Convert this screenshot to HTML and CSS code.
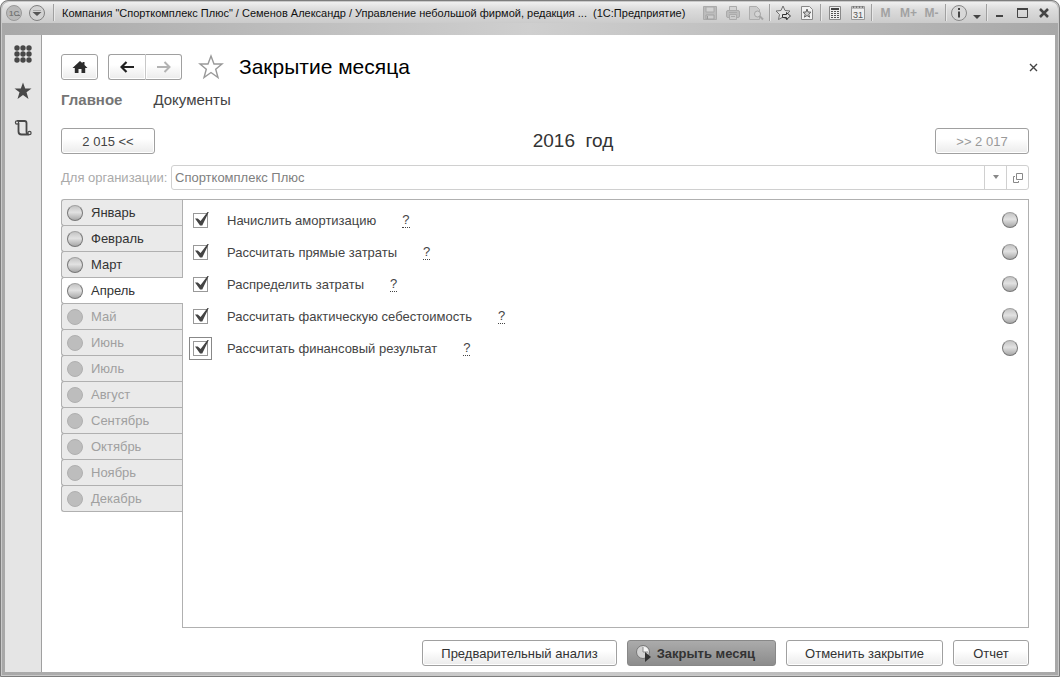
FILE: index.html
```html
<!DOCTYPE html>
<html lang="ru">
<head>
<meta charset="utf-8">
<title>Закрытие месяца</title>
<link rel="stylesheet" href="styles.css">
</head>
<body>
<div class="window">
  <header class="titlebar">
    <button class="orb" type="button" aria-label="Меню 1С"><svg width="18" height="18" viewBox="0 0 18 18"><circle cx="9" cy="9" r="7.500" fill="#b9b9b9" stroke="#999"/><text class="logo" x="4" y="12">1С</text><path d="M10 11.500h5" stroke="#777"/></svg></button>
    <button class="orb" type="button" aria-label="Главное меню"><svg width="18" height="18" viewBox="0 0 18 18"><circle cx="9" cy="9" r="7.500" fill="#d2d2d2" stroke="#808080"/><path d="M5 6.500H13" stroke="#aaa"/><path d="M4.500 8H13.500L9 12Z" fill="#555"/></svg></button>
    <span class="sep"></span>
    <div class="window-title">Компания "Спорткомплекс Плюс" / Семенов Александр / Управление небольшой фирмой, редакция ...&nbsp; (1С:Предприятие)</div>
    <div class="tools">
      <button class="tool" type="button" aria-label="Сохранить"><svg width="16" height="16" viewBox="0 0 16 16"><path d="M1.500 1.500h13v13h-13z" fill="#bcbcbc" stroke="#ababab"/><path d="M4 2h8v5H4z" fill="#d2d2d2" stroke="#aaa"/><path d="M4 10h8v4H4z" fill="#ccc" stroke="#a2a2a2"/><path d="M5.500 11v3" stroke="#999"/></svg></button>
      <button class="tool" type="button" aria-label="Печать"><svg width="16" height="16" viewBox="0 0 16 16"><path d="M4.500 1.500h7v5h-7z" fill="#d3d3d3" stroke="#ababab"/><rect x="1.500" y="5.500" width="13" height="7" rx="1.500" fill="#bcbcbc" stroke="#ababab"/><path d="M4.500 9.500h7v5h-7z" fill="#ccc" stroke="#ababab"/><path d="M6 11.500h4M4 7.500h8" stroke="#aaa"/></svg></button>
      <button class="tool" type="button" aria-label="Просмотр"><svg width="16" height="16" viewBox="0 0 16 16"><path d="M1.500 1.500h7l3 3v10h-10z" fill="#ccc" stroke="#adadad"/><circle cx="9.500" cy="9" r="3" fill="#d5d5d5" stroke="#a5a5a5"/><path d="m11.500 11 3.500 3.500" stroke="#a5a5a5" stroke-width="2"/></svg></button>
      <span class="sep"></span>
      <button class="tool" type="button" aria-label="Добавить в избранное"><svg width="17" height="16" viewBox="0 0 17 16"><path d="m8 1 2 4.500 5 .5-3.500 3.500 1 5L8 12l-4.500 2.500 1-5L1 6l5-.5Z" fill="#e4e4e4" stroke="#707070"/><path d="M7.500 9.500h4v-2l4 3.500-4 3.500v-2h-4z" fill="#ddd" stroke="#333"/></svg></button>
      <button class="tool" type="button" aria-label="Избранное"><svg width="16" height="16" viewBox="0 0 16 16"><path d="M2.500 1.500h8l3 3v10h-11z" fill="#f2f2f2" stroke="#888"/><path d="m8 4 1 3 3 .2-2.200 2 .8 3L8 10.500l-2.600 1.700.8-3L4 7.200 7 7Z" fill="#ccc" stroke="#666"/></svg></button>
      <span class="sep"></span>
      <button class="tool" type="button" aria-label="Калькулятор"><svg width="16" height="16" viewBox="0 0 16 16"><path d="M2.500 1.500h11v13h-11z" fill="#eee" stroke="#888"/><path d="M4 4h8" stroke="#444" stroke-width="2"/><path d="M4 6.500h8M4 8.500h8M4 10.500h8M4 12.500h8" stroke="#555" stroke-dasharray="2 1"/></svg></button>
      <button class="tool" type="button" aria-label="Календарь"><svg width="16" height="16" viewBox="0 0 16 16"><path d="M1.500 1.500h13v13h-13z" fill="#eee" stroke="#999"/><path d="M2 3h12" stroke="#bbb" stroke-width="2"/><path d="M3.500 1v2M6.500 1v2M9.500 1v2M12.500 1v2" stroke="#777"/><text class="day" x="3" y="13">31</text></svg></button>
      <span class="sep"></span>
      <button class="tool mem" type="button">M</button>
      <button class="tool mem" type="button">M+</button>
      <button class="tool mem" type="button">M-</button>
      <span class="sep"></span>
      <button class="tool info" type="button" aria-label="Справка"><svg width="18" height="18" viewBox="0 0 18 18"><circle cx="9" cy="9" r="7.500" fill="#d8d8d8" stroke="#888"/><path d="M9 4v2M9 7.500v6" stroke="#444" stroke-width="2"/></svg></button>
      <button class="tool more" type="button" aria-label="Ещё"><svg width="8" height="16" viewBox="0 0 8 16"><path d="M0 10h8l-4 4z" fill="#444"/></svg></button>
      <span class="sep"></span>
      <button class="tool win" type="button" aria-label="Свернуть"><svg width="14" height="16" viewBox="0 0 14 16"><path d="M3 11h7" stroke="#444" stroke-width="2"/></svg></button>
      <button class="tool win" type="button" aria-label="Развернуть"><svg width="14" height="16" viewBox="0 0 14 16"><path d="M2.500 12.500h10v-9h-10Z" fill="none" stroke="#444"/><path d="M2 4h11" stroke="#444" stroke-width="2"/></svg></button>
      <button class="tool win" type="button" aria-label="Закрыть окно"><svg width="14" height="16" viewBox="0 0 14 16"><path d="m3 4 8 8M11 4l-8 8" stroke="#444" stroke-width="2.500"/></svg></button>
    </div>
  </header>

  <div class="body">
    <nav class="sidebar" aria-label="Панель разделов">
      <button class="side" type="button" aria-label="Разделы"><svg width="18" height="18" viewBox="0 0 18 18" fill="#484848"><circle cx="3" cy="3" r="2.700"/><circle cx="9" cy="3" r="2.700"/><circle cx="15" cy="3" r="2.700"/><circle cx="3" cy="9" r="2.700"/><circle cx="9" cy="9" r="2.700"/><circle cx="15" cy="9" r="2.700"/><circle cx="3" cy="15" r="2.700"/><circle cx="9" cy="15" r="2.700"/><circle cx="15" cy="15" r="2.700"/></svg></button>
      <button class="side" type="button" aria-label="Избранное"><svg width="18" height="18" viewBox="0 0 18 18"><path d="m9 .5 2.200 6H17.500l-5 3.800 2 6.700L9 13l-5.500 4 2-6.700-5-3.800H6.800Z" fill="#484848"/></svg></button>
      <button class="side" type="button" aria-label="История"><svg width="18" height="18" viewBox="0 0 18 18" fill="none" stroke="#484848"><path d="M3 2h7.500q2 0 2 2v8.500c0 2 1 3 2.500 3H7.500c-2 0-3-1-3-3V4" stroke-width="1.800"/><circle cx="3" cy="3.500" r="1.600" stroke-width="1.200" fill="#e5e5e5"/><circle cx="15.500" cy="14" r="1.600" stroke-width="1.200" fill="#e5e5e5"/></svg></button>
    </nav>

    <main class="main">
      <div class="head">
        <button class="btn home" type="button" aria-label="Домой"><svg width="16" height="14" viewBox="0 0 16 14"><path d="M8 1 .5 8h2.300v5h3.700V9h3v4h3.700V8h2.300L12.500 5V2h-2v1.300Z" fill="#2b2b2b"/></svg></button>
        <div class="pair">
          <button class="btn back" type="button" aria-label="Назад"><svg width="14" height="12" viewBox="0 0 14 12"><path d="M14 6H2M6.500 1 1.500 6l5 5" fill="none" stroke="#222" stroke-width="2.200"/></svg></button>
          <button class="btn fwd" type="button" aria-label="Вперед" disabled><svg width="14" height="12" viewBox="0 0 14 12"><path d="M0 6h12M7.500 1l5 5-5 5" fill="none" stroke="#b3b3b3" stroke-width="2"/></svg></button>
        </div>
        <button class="fav" type="button" aria-label="В избранное"><svg width="26" height="26" viewBox="0 0 26 26"><path d="m13 2 3 8h8l-6.300 5.200 2.300 8.300-7-5-7 5 2.300-8.300L2 10h8Z" fill="#fff" stroke="#999" stroke-width="1.400"/></svg></button>
        <h1 class="title">Закрытие месяца</h1>
        <button class="close" type="button" aria-label="Закрыть"><svg width="9" height="9" viewBox="0 0 9 9"><path d="m1 1 7 7M8 1 1 8" stroke="#444" stroke-width="1.400"/></svg></button>
      </div>

      <nav class="links">
        <a class="link current" href="#">Главное</a>
        <a class="link" href="#">Документы</a>
      </nav>

      <div class="years">
        <button class="btn year" type="button">2 015 &lt;&lt;</button>
        <h2 class="current-year">2016&nbsp; год</h2>
        <button class="btn year" type="button" disabled>&gt;&gt; 2 017</button>
      </div>

      <div class="org">
        <label class="org-label" for="org">Для организации:</label>
        <div class="field">
          <input class="org-input" id="org" type="text" value="Спорткомплекс Плюс" readonly>
          <button class="field-btn" type="button" aria-label="Выбрать"><svg width="8" height="5" viewBox="0 0 8 5"><path d="M1 0h6L4 4z" fill="#888"/></svg></button>
          <button class="field-btn" type="button" aria-label="Открыть"><svg width="10" height="10" viewBox="0 0 10 10" fill="none" stroke="#888"><path d="M3.500.5h6v6h-6zM2 3.500H.5v6h5V8"/></svg></button>
        </div>
      </div>

      <div class="sheet">
        <div class="months" role="tablist" aria-orientation="vertical">
          <button class="month" role="tab" type="button"><span class="ball"></span>Январь</button>
          <button class="month" role="tab" type="button"><span class="ball"></span>Февраль</button>
          <button class="month" role="tab" type="button"><span class="ball"></span>Март</button>
          <button class="month active" role="tab" type="button" aria-selected="true"><span class="ball"></span>Апрель</button>
          <button class="month" role="tab" type="button" disabled><span class="ball"></span>Май</button>
          <button class="month" role="tab" type="button" disabled><span class="ball"></span>Июнь</button>
          <button class="month" role="tab" type="button" disabled><span class="ball"></span>Июль</button>
          <button class="month" role="tab" type="button" disabled><span class="ball"></span>Август</button>
          <button class="month" role="tab" type="button" disabled><span class="ball"></span>Сентябрь</button>
          <button class="month" role="tab" type="button" disabled><span class="ball"></span>Октябрь</button>
          <button class="month" role="tab" type="button" disabled><span class="ball"></span>Ноябрь</button>
          <button class="month" role="tab" type="button" disabled><span class="ball"></span>Декабрь</button>
        </div>
        <section class="panel" role="tabpanel">
          <div class="step"><input class="check" type="checkbox" id="s1" checked><label class="step-name" for="s1">Начислить амортизацию</label><a class="help" href="#">?</a><span class="ball"></span></div>
          <div class="step"><input class="check" type="checkbox" id="s2" checked><label class="step-name" for="s2">Рассчитать прямые затраты</label><a class="help" href="#">?</a><span class="ball"></span></div>
          <div class="step"><input class="check" type="checkbox" id="s3" checked><label class="step-name" for="s3">Распределить затраты</label><a class="help" href="#">?</a><span class="ball"></span></div>
          <div class="step"><input class="check" type="checkbox" id="s4" checked><label class="step-name" for="s4">Рассчитать фактическую себестоимость</label><a class="help" href="#">?</a><span class="ball"></span></div>
          <div class="step"><input class="check focused" type="checkbox" id="s5" checked><label class="step-name" for="s5">Рассчитать финансовый результат</label><a class="help" href="#">?</a><span class="ball"></span></div>
        </section>
      </div>

      <footer class="actions">
        <button class="btn action" type="button">Предварительный анализ</button>
        <button class="btn action primary" type="button"><svg width="18" height="18" viewBox="0 0 18 18"><circle cx="8" cy="8" r="6.500" fill="#d2d2d2" stroke="#777"/><path d="M8 8V2.500A5.500 5.500 0 0 1 13.500 8Z" fill="#f6f6f6"/><path d="M8 3v5h5" fill="none" stroke="#888"/><path d="m10 8 6 5-6 5z" fill="#333"/></svg>Закрыть месяц</button>
        <button class="btn action" type="button">Отменить закрытие</button>
        <button class="btn action" type="button">Отчет</button>
      </footer>
    </main>
  </div>
</div>
</body>
</html>
```
FILE: styles.css
```css
* { box-sizing: border-box; }

body {
  margin: 0;
  background: #fff;
  font-family: "Liberation Sans", Arial, sans-serif;
  font-size: 13px;
  color: #444;
}

button, input { font: inherit; color: inherit; }

button {
  display: flex;
  align-items: center;
  justify-content: center;
  margin: 0;
  padding: 0;
  border: 0;
  background: none;
}

a { color: inherit; text-decoration: none; }
h1, h2 { margin: 0; font-weight: normal; }
svg { flex: none; display: block; }

/* Window frame */
.window {
  display: flex;
  flex-direction: column;
  min-height: 100vh;
  padding: 0 4px 4px;
  border: 1px solid #7d7d7d;
  border-radius: 8px 8px 0 0;
  background: linear-gradient(90deg, #a8a8a8, #cfcfcf 50%, #a8a8a8);
  box-shadow: inset 0 0 0 1px #c9c9c9;
}

.titlebar {
  display: flex;
  align-items: center;
  height: 21px;
  margin: 1px -3px 12px;
  padding: 0 3px;
  border-radius: 7px 7px 0 0;
  background: linear-gradient(#f0f0f0, #dcdcdc 35%, #cbcbcb);
}

.orb { width: 18px; margin-right: 5px; }
.logo { font-size: 8px; font-weight: bold; fill: #777; }

.sep {
  flex: none;
  width: 5px;
  height: 17px;
  background: linear-gradient(90deg, transparent 2px, #a0a0a0 2px 3px, #e8e8e8 3px 4px, transparent 4px);
}

.window-title {
  flex: 1;
  min-width: 0;
  padding-left: 6px;
  overflow: hidden;
  white-space: nowrap;
  font-size: 11px;
  color: #111;
}

.tools { display: flex; align-items: center; }
.tool { width: 23px; height: 20px; }
.info, .win { width: 22px; }
.more { width: 14px; }
.mem { font-size: 12px; font-weight: bold; color: #a2a2a2; }
.day { font-size: 9px; fill: #555; }

.body { display: flex; flex: 1; background: #fff; }

.sidebar {
  display: flex;
  flex-direction: column;
  align-items: center;
  gap: 19px;
  width: 37px;
  padding-top: 10px;
  border-right: 1px solid #a0a0a0;
  background: #e5e5e5;
}

.side { width: 20px; height: 18px; }

.main {
  display: flex;
  flex: 1;
  flex-direction: column;
  min-width: 0;
  padding: 19px 26px 6px 19px;
}

/* Buttons */
.btn {
  height: 26px;
  border: 1px solid #a0a0a0;
  border-radius: 3px;
  background: linear-gradient(#fff 40%, #ebebeb);
  box-shadow: inset 0 0 0 1px #fff;
}

.btn:disabled { color: #999; }

.head { display: flex; align-items: center; height: 26px; }
.home { width: 37px; }
.pair { display: flex; margin: 0 16px 0 10px; }
.back { width: 38px; border-radius: 3px 0 0 3px; border-right-color: #c8c8c8; }
.fwd { width: 36px; border-left: 0; border-radius: 0 3px 3px 0; }
.fav { margin-right: 15px; }
.title { flex: 1; font-size: 21px; line-height: 28px; color: #000; }
.close { width: 19px; height: 19px; margin-right: -14px; }

.links {
  display: flex;
  gap: 31px;
  margin: 10px 0 18px;
  font-size: 15px;
  line-height: 20px;
}

.current { font-weight: bold; color: #757575; }

.years { display: flex; align-items: center; justify-content: space-between; }
.year { width: 94px; }
.current-year { padding-left: 56px; font-size: 19px; line-height: 24px; color: #333; }

.org { display: flex; align-items: center; margin: 11px 0 9px; }
.org-label { width: 110px; color: #aaa; }

.field {
  display: flex;
  flex: 1;
  height: 25px;
  border: 1px solid #d0d0d0;
  border-radius: 3px;
}

.org-input {
  flex: 1;
  min-width: 0;
  padding: 0 3px;
  border: 0;
  outline: 0;
  background: none;
  color: #808080;
}

.field-btn { width: 22px; border-left: 1px solid #d0d0d0; }

/* Month tabs and their panel */
.sheet { display: flex; flex: 1; }
.months { width: 121px; }

.month {
  justify-content: flex-start;
  gap: 8px;
  width: 121px;
  height: 27px;
  margin-bottom: -1px;
  padding-left: 5px;
  border: 1px solid #b0b0b0;
  border-right: 0;
  border-radius: 3px 0 0 3px;
  background: #eaeaea;
  color: #333;
}

.month:disabled { color: #a0a0a0; }

.month.active {
  position: relative;
  width: 122px;
  background: #fff;
}

.ball {
  flex: none;
  width: 16px;
  height: 16px;
  border: 1px solid #777;
  border-top-color: #a0a0a0;
  border-radius: 50%;
  background: linear-gradient(#c4c4c4, #e2e2e2 45%, #a8a8a8);
}

.month:disabled .ball { border-color: #b0b0b0; background: #bdbdbd; }

.panel {
  flex: 1;
  padding: 4px 10px;
  border: 1px solid #b0b0b0;
}

.step { display: flex; align-items: center; height: 32px; }

.check {
  appearance: none;
  position: relative;
  flex: none;
  width: 15px;
  height: 15px;
  margin: 0 19px 0 0;
  border: 1px solid #999;
  background: #fff;
}

.check:checked::before {
  content: "";
  position: absolute;
  top: -2px;
  left: 1px;
  width: 14px;
  height: 14px;
  background: #444;
  clip-path: polygon(0 50%, 20% 50%, 40% 68%, 92% 0, 100% 0, 52% 100%, 36% 100%);
}

.focused { outline: 1px solid #888; outline-offset: 3px; }
.step-name { margin-right: 26px; }
.help { margin-right: auto; border-bottom: 1px dotted #444; line-height: 14px; }

.actions { display: flex; justify-content: flex-end; gap: 10px; margin-top: 12px; }
.action { min-width: 76px; padding: 0 18px; color: #333; }

.primary {
  gap: 4px;
  padding: 0 20px 0 7px;
  border-color: #888;
  background: linear-gradient(#ababab, #8c8c8c);
  box-shadow: none;
  font-weight: bold;
}
```
